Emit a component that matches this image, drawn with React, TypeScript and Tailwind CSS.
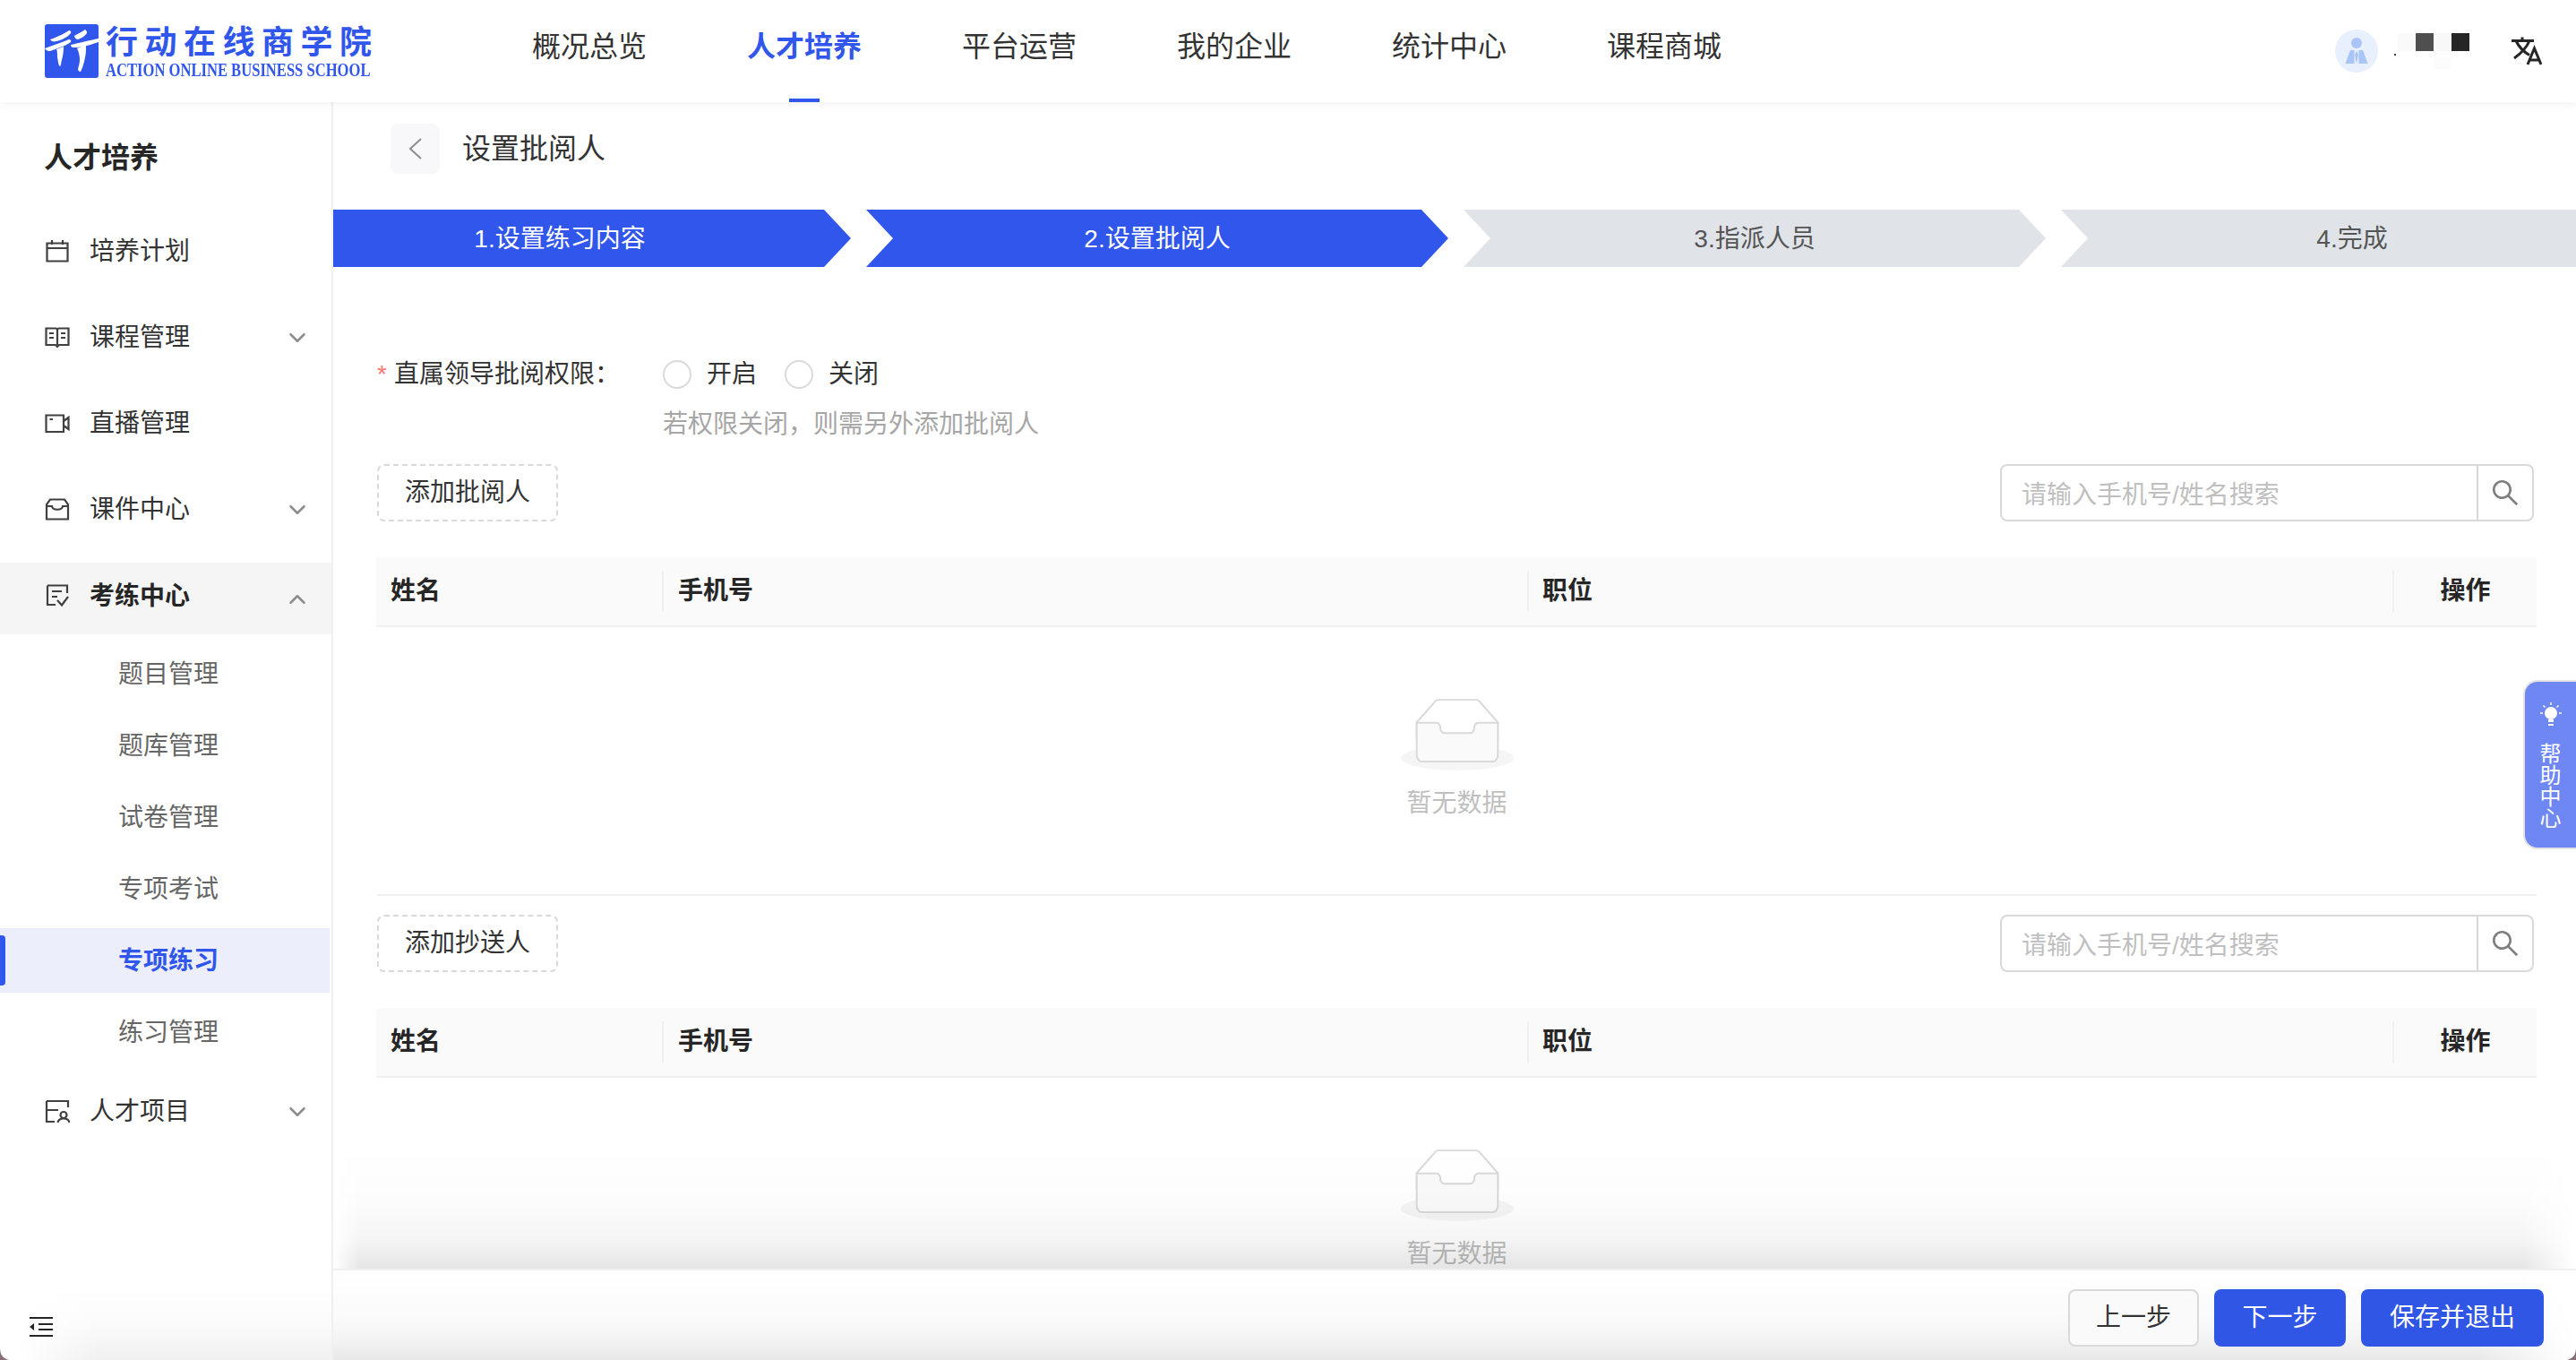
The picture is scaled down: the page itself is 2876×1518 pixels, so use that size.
import { ChevronDown, ChevronUp } from "lucide-react";
import { AiOutlineSearch } from "react-icons/ai";

const FONT = `font-['Liberation_Sans','Noto_Sans_CJK_SC',sans-serif]`;

const navItems = ["概况总览", "人才培养", "平台运营", "我的企业", "统计中心", "课程商城"];
const subItems = ["题目管理", "题库管理", "试卷管理", "专项考试", "专项练习", "练习管理"];

function LogoMark() {
  return (
    <svg width="60" height="60" viewBox="0 0 60 60" className="shrink-0">
      <rect width="60" height="60" rx="3" fill="#3056ec" />
      <g fill="#fff">
        <path d="M6 17C12 15 21 11 27 7C29 7 30 9 29 10C25 15 18 18 13 19C10 20 7 19 6 17z" />
        <path d="M0 27C9 24 19 20 27 17C29 17 30 19 29 20C25 23 20 25 17 26C11 28 7 30 5 30C3 30 1 29 0 27z" />
        <path d="M13 28L21 25C21 31 20 37 19 40C18 44 18 47 17 47C15 46 15 41 14 37C14 33 14 30 13 28z" />
        <path d="M33 13C37 11 42 8 45 6C47 7 47 9 47 10C44 14 40 16 37 17C35 17 33 15 33 13z" />
        <path d="M29 23C38 21 50 18 60 16V20C53 22 48 24 43 25C38 26 34 26 32 26C30 26 29 25 29 23z" />
        <path d="M36 27L46 23C46 29 46 33 45 37C44 43 42 49 40 53C38 53 37 51 37 50C38 46 39 43 39 40C39 35 38 31 36 27z" />
      </g>
    </svg>
  );
}

function Translate() {
  return (
    <svg width="34" height="32" viewBox="0 0 34 32" fill="none" stroke="#262626" strokeWidth="3">
      <path d="M0 4.5H25M12 0.5V4.5" />
      <path d="M5 4.5C8 11 14 17 20 20.5" />
      <path d="M20 4.5C17 12 10 19 3 24" />
      <path d="M18 31L25.5 13L33 31M20.5 26H30.5" />
    </svg>
  );
}

function Icon({ d, className = "" }: { d: string; className?: string }) {
  return (
    <svg width="28" height="28" viewBox="0 0 28 28" fill="none" stroke="#404040" strokeWidth="2.2" className={`shrink-0 ${className}`}>
      <path d={d} />
    </svg>
  );
}

const ICONS = {
  plan: "M2.5 5.5H25.5V25.5H2.5ZM2.5 11H25.5M8 2V7M20 2V7",
  book: "M1.5 4.5H12C13.2 4.5 14 5.3 14 6.5C14 5.3 14.8 4.5 16 4.5H26.5V23H16L14 25L12 23H1.5ZM14 6.5V23M5 10H10M5 15H10M18 10H23M18 15H23",
  video: "M1.5 5.5H21V24H1.5ZM21 12L26.5 8V21L21 17M5.5 10H9",
  inbox: "M6 3.5H22L26 9V25.5H2V9ZM2 11H8C8.5 16 19.5 16 20 11H26",
  exam: "M3 3.5H25V12M3 3.5V25H12M8 10H19M8 16H14M14 20L19 25.5L26 16",
  project: "M2 3H26V10M2 3V26H11M2 13H15M21 15A3.5 3.5 0 1 0 21 22A3.5 3.5 0 1 0 21 15ZM14.5 27C15 24 17.5 22.5 21 22.5C24.5 22.5 27 24 27.5 27",
};

function MenuRow({ icon, label, chevron, active }: { icon: string; label: string; chevron?: "down" | "up"; active?: boolean }) {
  return (
    <div className={`flex h-[80px] items-center pl-[50px] ${active ? "bg-[#f5f5f5]" : ""}`}>
      <Icon d={icon} className={active ? "-mt-2" : ""} />
      <span className={`ml-[22px] flex-1 text-[28px] leading-[28px] ${active ? "-mt-1 font-bold text-[#262626]" : "mt-[2px] text-[#333333]"}`}>{label}</span>
      {chevron === "down" && <ChevronDown size={30} strokeWidth={2} className="mr-[23px] mt-[2px] text-[#8c8c8c]" />}
      {chevron === "up" && <ChevronUp size={30} strokeWidth={2} className="mr-[23px] mt-[2px] text-[#8c8c8c]" />}
    </div>
  );
}

function Sidebar() {
  return (
    <aside className="relative flex w-[372px] shrink-0 flex-col border-r-2 border-[#f0f0f0] bg-white">
      <div className="pl-[49px] pt-[44px] text-[32px] font-bold leading-[36px] text-[#262626]">人才培养</div>
      <div className="mt-[46px] flex flex-col gap-[16px]">
        <MenuRow icon={ICONS.plan} label="培养计划" />
        <MenuRow icon={ICONS.book} label="课程管理" chevron="down" />
        <MenuRow icon={ICONS.video} label="直播管理" />
        <MenuRow icon={ICONS.inbox} label="课件中心" chevron="down" />
        <div className="mt-[4px]">
          <MenuRow icon={ICONS.exam} label="考练中心" chevron="up" active />
          <div className="mt-[8px] flex flex-col gap-[8px]">
            {subItems.map((s) => (
              <div
                key={s}
                className={`relative flex h-[72px] items-center pl-[132px] pt-[2px] text-[28px] ${
                  s === "专项练习" ? "mr-[2px] bg-[#eceffb] font-bold text-[#3056ec]" : "text-[#666666]"
                }`}
              >
                {s === "专项练习" && <span className="absolute left-0 top-[8px] h-[56px] w-[6px] rounded-r bg-[#3056ec]" />}
                {s}
              </div>
            ))}
          </div>
        </div>
        <div className="-mt-[4px]">
          <MenuRow icon={ICONS.project} label="人才项目" chevron="down" />
        </div>
      </div>
      <div className="mt-auto pb-[26px] pl-[33px]">
        <svg width="26" height="22" viewBox="0 0 26 22" fill="#262626">
          <rect width="26" height="2" />
          <rect x="10" y="7" width="16" height="2" />
          <rect x="10" y="13" width="16" height="2" />
          <rect y="20" width="26" height="2" />
          <path d="M0 11L5 7V15Z" />
        </svg>
      </div>
      <div className="pointer-events-none absolute inset-x-0 bottom-0 h-[80px] bg-[linear-gradient(to_bottom,rgba(0,0,0,0),rgba(0,0,0,0.015)_50%,rgba(0,0,0,0.06))] [mask-image:linear-gradient(to_right,transparent_20px,black_110px)]" />
    </aside>
  );
}

function Steps() {
  const steps = ["1.设置练习内容", "2.设置批阅人", "3.指派人员", "4.完成"];
  return (
    <div className="mt-[40px] flex gap-[17px] overflow-hidden">
      {steps.map((s, i) => (
        <div
          key={s}
          className={`flex h-[64px] w-[650px] shrink-0 items-center justify-center pt-[2px] text-[28px] [clip-path:polygon(0_0,calc(100%-30px)_0,100%_50%,calc(100%-30px)_100%,0_100%,30px_50%)] ${
            i === 0 ? "ml-[-72px] " : ""
          }${i < 2 ? "bg-[#3056ec] text-white" : "bg-[#e0e3e8] text-[#555555]"}`}
        >
          {s}
        </div>
      ))}
    </div>
  );
}

function EmptyBox() {
  return (
    <svg width="126" height="81" viewBox="0 0 64 41">
      <g transform="translate(0 1)" fill="none" fillRule="evenodd">
        <ellipse fill="#f5f5f5" cx="32" cy="33" rx="32" ry="7" />
        <g fillRule="nonzero" stroke="#d9d9d9">
          <path d="M55 12.76L44.854 1.258C44.367.474 43.656 0 42.907 0H21.093c-.749 0-1.46.474-1.947 1.257L9 12.761V22h46v-9.24z" />
          <path
            d="M41.613 15.931c0-1.605.994-2.93 2.227-2.931H55v18.137C55 33.26 53.68 35 52.05 35h-40.1C10.32 35 9 33.259 9 31.137V13h11.16c1.233 0 2.227 1.323 2.227 2.928v.022c0 1.605 1.005 2.901 2.237 2.901h14.752c1.232 0 2.237-1.308 2.237-2.913v-.007z"
            fill="#fafafa"
          />
        </g>
      </g>
    </svg>
  );
}

function PersonSection({ addLabel }: { addLabel: string }) {
  return (
    <div>
      <div className="flex items-center justify-between pr-[47px]">
        <button className="h-[64px] w-[202px] rounded-[8px] border-2 border-dashed border-[#d9d9d9] text-[28px] text-[#333333]">{addLabel}</button>
        <div className="flex h-[64px] w-[596px] rounded-[8px] border-2 border-[#d9d9d9]">
          <div className="flex flex-1 items-center pl-[22px] pt-[6px] text-[28px] text-[#bfbfbf]">请输入手机号/姓名搜索</div>
          <div className="flex w-[62px] items-center justify-center border-l-2 border-[#d9d9d9]">
            <AiOutlineSearch size={36} className="text-[#7f7f7f]" />
          </div>
        </div>
      </div>
      <div className="ml-[-1px] mr-[44px] mt-[40px] grid h-[78px] grid-cols-[319px_966px_966px_161px] items-center border-b-2 border-[#f0f0f0] bg-[#fafafa] text-[28px] font-bold text-[#262626]">
        <div className="pl-[16px]">姓名</div>
        <div className="h-[46px] border-l-2 border-[#f0f0f0] pl-[16px] leading-[46px]">手机号</div>
        <div className="h-[46px] border-l-2 border-[#f0f0f0] pl-[15px] leading-[46px]">职位</div>
        <div className="h-[46px] border-l-2 border-[#f0f0f0] text-center leading-[46px]">操作</div>
      </div>
      <div className="mr-[44px] flex h-[298px] flex-col items-center pt-[79px]">
        <EmptyBox />
        <div className="mt-[17px] text-[28px] leading-[40px] text-[#bfbfbf]">暂无数据</div>
      </div>
    </div>
  );
}

export default function App() {
  return (
    <div className={`relative flex h-[1518px] w-[2876px] flex-col overflow-hidden bg-white ${FONT}`}>
      {/* Header */}
      <header className="relative z-10 flex h-[114px] shrink-0 items-center bg-white shadow-[0_2px_10px_rgba(0,0,0,0.06)]">
        <div className="ml-[50px] flex items-center">
          <LogoMark />
          <div className="ml-[8px] flex w-[298px] flex-col">
            <div className="mt-[2px] text-[36px] font-bold leading-[38px] tracking-[7.5px] whitespace-nowrap text-[#3056ec]">行动在线商学院</div>
            <div className="mt-[1px] origin-left scale-x-[0.79] font-['Liberation_Serif',serif] text-[21px] font-bold leading-[20px] whitespace-nowrap text-[#3056ec]">
              ACTION ONLINE BUSINESS SCHOOL
            </div>
          </div>
        </div>
        <nav className="ml-[178px] flex h-full gap-[112px]">
          {navItems.map((n) => (
            <div key={n} className={`relative flex h-full -translate-y-[5px] items-center text-[32px] whitespace-nowrap ${n === "人才培养" ? "font-bold text-[#3056ec]" : "text-[#333333]"}`}>
              {n}
              {n === "人才培养" && <span className="absolute bottom-[-5px] left-1/2 h-[4px] w-[34px] -translate-x-1/2 bg-[#3056ec]" />}
            </div>
          ))}
        </nav>
        <div className="ml-auto mr-[38px] flex items-center">
          <div className="flex h-[48px] w-[48px] items-center justify-center rounded-full bg-[#e8effd]">
            <svg width="26" height="30" viewBox="0 0 26 30" fill="#a9c4f7">
              <circle cx="13" cy="6" r="6" />
              <path d="M6 14L10.5 14V29H0.5ZM20 14L15.5 14V29H25.5ZM13 15L15 19L13 29L11 19Z" />
            </svg>
          </div>
          <div className="relative ml-[22px] flex h-[40px] flex-col">
            <span className="absolute -left-[4px] top-[23px] h-[2px] w-[2px] bg-[#404040]" />
            <div className="flex">
              <span className="h-[20px] w-[20px] bg-[#fafafa]" />
              <span className="h-[20px] w-[20px] bg-[#4f4f4f]" />
              <span className="h-[20px] w-[20px] bg-[#f8f8f8]" />
              <span className="h-[20px] w-[20px] bg-[#262626]" />
            </div>
            <span className="ml-[40px] h-[20px] w-[20px] bg-[#fcfcfc]" />
          </div>
          <div className="ml-[47px]">
            <Translate />
          </div>
        </div>
      </header>

      <div className="flex min-h-0 flex-1">
        <Sidebar />
        <main className="relative flex min-w-0 flex-1 flex-col">
          <div className="min-h-0 flex-1 overflow-hidden">
            {/* Breadcrumb */}
            <div className="ml-[64px] mt-[24px] flex h-[56px] items-center">
              <div className="flex h-[56px] w-[55px] items-center justify-center rounded-[8px] bg-[#f8f8fa]">
                <svg width="18" height="26" viewBox="0 0 18 26" fill="none" stroke="#8c8c8c" strokeWidth="2">
                  <path d="M15 2L3 13L15 24" />
                </svg>
              </div>
              <div className="ml-[25px] text-[32px] text-[#333333]">设置批阅人</div>
            </div>
            <Steps />
            {/* Permission */}
            <div className="mt-[94px] pl-[49px]">
              <div className="flex h-[52px] items-center text-[28px]">
                <span className="w-[19px] text-[#ff7875]">*</span>
                <span className="w-[300px] text-[#333333]">直属领导批阅权限：</span>
                <span className="h-[32px] w-[32px] rounded-full border-2 border-[#d9d9d9]" />
                <span className="ml-[17px] text-[#333333]">开启</span>
                <span className="ml-[31px] h-[32px] w-[32px] rounded-full border-2 border-[#d9d9d9]" />
                <span className="ml-[17px] text-[#333333]">关闭</span>
              </div>
              <div className="ml-[319px] mt-[10px] text-[28px] leading-[40px] text-[#a6a6a6]">若权限关闭，则需另外添加批阅人</div>
            </div>
            <div className="ml-[49px] mt-[24px] flex flex-col">
              <PersonSection addLabel="添加批阅人" />
              <div className="mr-[44px] h-[2px] bg-[#f0f0f0]" />
              <div className="mt-[21px]">
                <PersonSection addLabel="添加抄送人" />
              </div>
            </div>
          </div>
          <div className="pointer-events-none absolute inset-x-0 bottom-[102px] h-[134px] bg-[linear-gradient(to_bottom,rgba(0,0,0,0),rgba(0,0,0,0.012)_45%,rgba(0,0,0,0.04)_75%,rgba(0,0,0,0.1))] [mask-image:linear-gradient(to_right,transparent,black_30px,black_calc(100%-60px),transparent)]" />
          {/* Footer */}
          <footer className="relative flex h-[102px] shrink-0 items-center justify-end gap-[17px] border-t-2 border-[#f0f0f0] bg-white pt-[6px] pr-[36px]">
            <div className="pointer-events-none absolute inset-0 bg-[linear-gradient(to_bottom,rgba(0,0,0,0),rgba(0,0,0,0.02)_55%,rgba(0,0,0,0.05)_80%,rgba(0,0,0,0.09))] [mask-image:linear-gradient(to_left,transparent,black_110px)]" />
            <button className="relative h-[64px] w-[146px] rounded-[8px] border-2 border-[#d9d9d9] bg-[#fafafa] text-[28px] text-[#333333]">上一步</button>
            <button className="relative h-[64px] w-[147px] rounded-[8px] bg-[#3056e6] text-[28px] text-white">下一步</button>
            <button className="relative h-[64px] w-[204px] rounded-[8px] bg-[#3056e6] text-[28px] text-white">保存并退出</button>
          </footer>
        </main>
      </div>

      {/* Help tab */}
      <div className="absolute right-0 top-[759px] flex h-[189px] w-[59px] flex-col items-center rounded-l-[16px] border-2 border-r-0 border-[#e4e4e4] bg-[#6f87f3] pt-[22px] text-white">
        <svg width="26" height="30" viewBox="0 0 26 30" fill="#fff">
          <circle cx="13" cy="13" r="7" />
          <rect x="10" y="20" width="6" height="3" />
          <rect x="10" y="25" width="6" height="2" />
          <path d="M13 1V4M1 13H4M22 13H25M4.5 4.5L6.5 6.5M21.5 4.5L19.5 6.5" stroke="#fff" strokeWidth="1.5" />
        </svg>
        <div className="mt-[17px] text-center text-[24px] leading-[24px]">帮<br />助<br />中<br />心</div>
      </div>

      {/* Window corners */}
      <svg width="10" height="14" viewBox="0 0 10 14" className="absolute bottom-0 left-0">
        <path d="M0 0C0 8 3 12 10 14H0Z" fill="#8a7078" />
      </svg>
      <svg width="10" height="14" viewBox="0 0 10 14" className="absolute bottom-0 right-0">
        <path d="M10 0C10 8 7 12 0 14H10Z" fill="#8a7078" />
      </svg>
    </div>
  );
}
